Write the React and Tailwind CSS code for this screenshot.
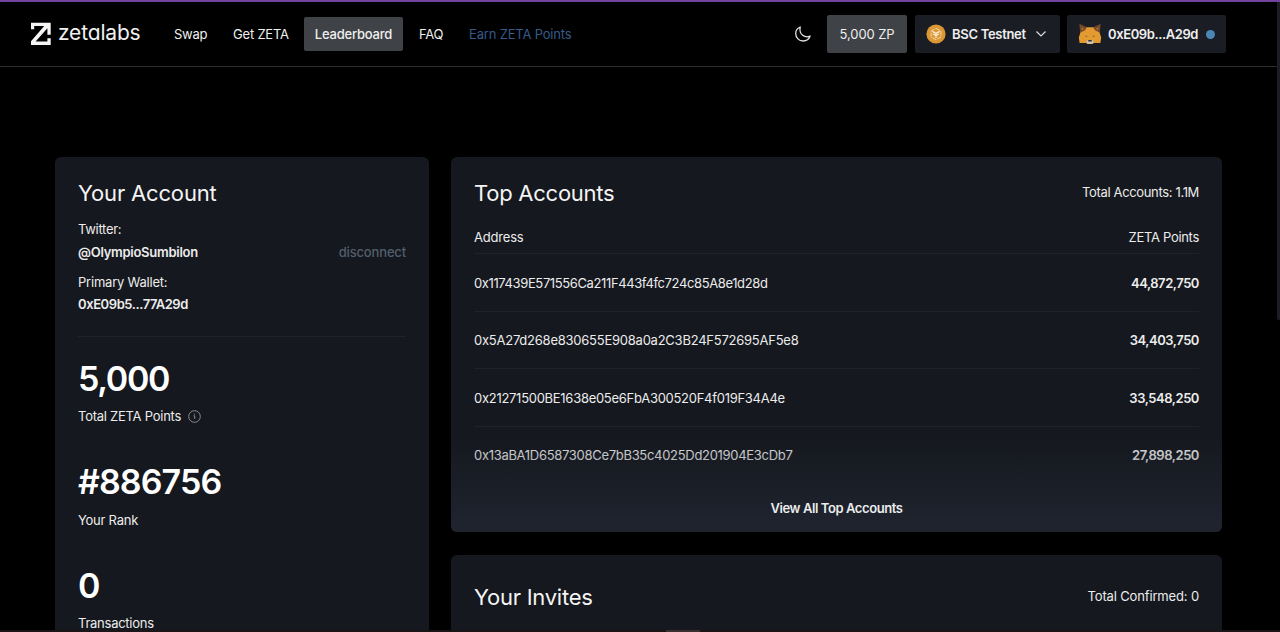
const ACCOUNTS = [
  { address: "0x117439E571556Ca211F443f4fc724c85A8e1d28d", points: "44,872,750", track: "tracking-[-0.38px]" },
  { address: "0x5A27d268e830655E908a0a2C3B24F572695AF5e8", points: "34,403,750", track: "tracking-[-0.24px]" },
  { address: "0x21271500BE1638e05e6FbA300520F4f019F34A4e", points: "33,548,250", track: "tracking-[-0.28px]" },
  { address: "0x13aBA1D6587308Ce7bB35c4025Dd201904E3cDb7", points: "27,898,250", track: "tracking-[-0.3px]" },
];

function Logo() {
  return (
    <div className="flex w-[110px] items-center">
      <svg width="20" height="24" viewBox="0 0 20 24" fill="#f5f5f5" className="shrink-0">
        <path d="M0 0.8H19.7V12.8H16.4V6.3L4.6 19.6H16.4V16.2H19.7V23H0V19.2L13.2 4.1H3.2V7.3H0Z" />
      </svg>
      <span className="-mt-[2px] ml-[7px] text-[21px] leading-[24px] tracking-[-0.2px] whitespace-nowrap text-[#f0f0f0]">
        zet<span className="[font-feature-settings:'cv11']">a</span>labs
      </span>
    </div>
  );
}

function Fox() {
  return (
    <svg width="24" height="22" viewBox="0 0 24 22" className="shrink-0">
      <path d="M2.5 2L8 4.2H16L21.5 2L21.4 9L23.2 14.5L22.4 20H16L14.5 21H9.5L8 20H1.6L0.8 14.5L2.6 9Z" fill="#e39a30" />
      <path d="M1.4 0.8L8.6 4.4L7 7.3L3 9.3L1.8 6Z" fill="#75482a" />
      <path d="M22.6 0.8L15.4 4.4L17 7.3L21 9.3L22.2 6Z" fill="#75482a" />
      <path d="M3.4 4.2L6 5.7L4.2 7.2Z M20.6 4.2L18 5.7L19.8 7.2Z" fill="#b17435" />
      <path d="M7.6 12.4L9.4 13.2L8 13.9Z M16.4 12.4L14.6 13.2L16 13.9Z" fill="#5c4029" />
      <path d="M9 17.3H15L15.6 19.2L14.2 20.8H9.8L8.4 19.2Z" fill="#cdc6ba" />
      <path d="M10.4 16.9H13.6L13.9 18.5H10.1Z" fill="#34302f" />
    </svg>
  );
}

function Coin() {
  return (
    <svg width="20" height="20" viewBox="0 0 20 20" fill="none" className="shrink-0">
      <circle cx="10" cy="10" r="9.6" fill="#dd9836" />
      <path d="M10 4.3L14.9 7.1V12.9L10 15.7L5.1 12.9V7.1Z" stroke="#f3dcb6" strokeWidth="0.9" strokeDasharray="4.4 1.2" />
      <path d="M6.4 7.4L10 9.4L13.6 7.4M10 9.2V14M7.2 10L10 11.8L12.8 10" stroke="#f9ead2" strokeWidth="1.3" />
    </svg>
  );
}

function Header() {
  return (
    <header className="flex h-[65px] shrink-0 items-center border-b border-[#2b2b2b] pr-[54px] pl-[31px] text-[13px] text-[#efefef]">
      <Logo />
      <nav className="ml-[33px] flex items-center">
        <a className="w-[59px] pt-[2px] tracking-[-0.25px]">Swap</a>
        <a className="w-[71px] pt-[2px] tracking-[-0.2px]">Get ZETA</a>
        <a className="flex h-[34px] w-[99px] items-center justify-center rounded-xs bg-[#3f4246] pt-px font-medium tracking-[-0.2px]">
          Leaderboard
        </a>
        <a className="ml-[16px] w-[50px] pt-[2px] tracking-[-0.2px]">FAQ</a>
        <a className="pt-[2px] tracking-[-0.18px] text-[#365a8a]">Earn ZETA Points</a>
      </nav>
      <div className="ml-auto flex items-center">
        <svg width="18" height="18" viewBox="0 0 18 18" fill="none" stroke="#e4e4e4" strokeWidth="1.3" strokeLinejoin="round">
          <path d="M6.2 2C3.5 3.1 1.7 5.7 1.7 8.6C1.7 12.7 5 16 9.1 16C12.3 16 15.1 13.9 16.1 11C11.2 13.4 4.6 9.6 6.2 2Z" />
        </svg>
        <div className="ml-[15px] flex h-[38px] w-[80px] items-center justify-center rounded-xs bg-[#3f4246] pt-px tracking-[-0.1px]">
          5,000 ZP
        </div>
        <div className="ml-[8px] flex h-[38px] w-[145px] items-center rounded-xs bg-[#1b1d25] pl-[11px] font-semibold">
          <Coin />
          <span className="ml-[6px] w-[83px] pt-px tracking-[-0.3px] whitespace-nowrap">BSC Testnet</span>
          <svg width="12" height="8" viewBox="0 0 12 8" fill="none" stroke="#dcdcdc" strokeWidth="1.2">
            <path d="M1.5 1.5L6 6L10.5 1.5" />
          </svg>
        </div>
        <div className="ml-[7px] flex h-[38px] w-[159px] items-center rounded-xs bg-[#1b1d25] pl-[11px] font-semibold">
          <Fox />
          <span className="ml-[6px] w-[98px] pt-px tracking-[-0.4px] whitespace-nowrap">0xE09b...A29d</span>
          <span className="size-[9px] rounded-full bg-[#4a86b6]" />
        </div>
      </div>
    </header>
  );
}

function Stat({ value, label, track, info }) {
  return (
    <div>
      <div className={`flex h-[40px] items-center pb-[2px] text-[34px] font-semibold text-white ${track}`}>{value}</div>
      <div className="mt-[7px] flex h-[22px] items-center tracking-[-0.25px]">
        {label}
        {info && (
          <svg width="13" height="13" viewBox="0 0 13 13" fill="none" stroke="#94979b" className="-mt-[2px] ml-[7px]">
            <circle cx="6.5" cy="6.5" r="5.8" strokeWidth="0.9" />
            <path d="M5.5 5.8H6.7V9M6.5 3.7V4.7" strokeWidth="0.9" />
          </svg>
        )}
      </div>
    </div>
  );
}

function AccountCard() {
  return (
    <section className="h-[600px] w-[374px] rounded-[6px] bg-[#15181e] px-[23px] pt-[22px]">
      <h2 className="flex h-[28px] items-center text-[22px] tracking-[-0.17px] text-[#f4f4f4]">Your Account</h2>
      <div className="mt-[12px] flex h-[22px] items-center tracking-[-0.3px]">Twitter:</div>
      <div className="mt-px flex h-[22px] items-center justify-between font-semibold">
        <span className="tracking-[-0.27px]">@OlympioSumbilon</span>
        <span className="font-medium tracking-[-0.15px] text-[#525e6b]">disconnect</span>
      </div>
      <div className="mt-[8px] flex h-[22px] items-center tracking-[-0.22px]">Primary Wallet:</div>
      <div className="flex h-[22px] items-center font-semibold tracking-[-0.42px]">0xE09b5...77A29d</div>
      <div className="mt-[20px] h-px bg-[#1f2328]" />
      <div className="mt-[22px] flex flex-col gap-[34.5px]">
        <Stat value="5,000" label="Total ZETA Points" track="tracking-[-1.3px]" info />
        <Stat value="#886756" label="Your Rank" track="tracking-[-0.9px]" />
        <Stat value="0" label="Transactions" track="tracking-normal" />
      </div>
    </section>
  );
}

function TopAccountsCard() {
  return (
    <section className="relative h-[375px] overflow-hidden rounded-[6px] bg-[#15181e] px-[23px] pt-[22px]">
      <div className="flex h-[28px] items-center justify-between">
        <h2 className="text-[22px] tracking-[-0.25px] text-[#f4f4f4]">Top Accounts</h2>
        <span className="tracking-[-0.35px]">Total Accounts: 1.1M</span>
      </div>
      <div className="mt-[19px] flex h-[28px] items-start justify-between border-b border-[#1f2328] leading-[22px]">
        <span className="tracking-[-0.2px]">Address</span>
        <span className="tracking-[-0.3px]">ZETA Points</span>
      </div>
      {ACCOUNTS.map((a) => (
        <div key={a.address} className="flex h-[57.5px] items-center justify-between border-b border-[#1f2328] pt-[2px] last-of-type:border-0 last-of-type:pt-px">
          <span className={a.track}>{a.address}</span>
          <span className="font-semibold tracking-[-0.45px]">{a.points}</span>
        </div>
      ))}
      <a className="absolute inset-x-0 bottom-0 flex h-[94px] items-end justify-center bg-linear-to-b from-[#1e232e00] to-[#1e232e] to-90% pb-[13px] leading-[22px] font-semibold tracking-[-0.42px]">
        View All Top Accounts
      </a>
    </section>
  );
}

export default function App() {
  return (
    <div className="relative flex h-[632px] w-[1280px] flex-col overflow-hidden border-t-2 border-[#70449c] bg-black font-['Inter',sans-serif] text-[13px] text-[#ececec]">
      <Header />
      <main className="mt-[90px] ml-[55px] flex items-start gap-[22px]">
        <AccountCard />
        <div className="flex w-[771px] flex-col gap-[23px]">
          <TopAccountsCard />
          <section className="h-[200px] rounded-[6px] bg-[#15181e] px-[23px] pt-[28px]">
            <div className="flex h-[28px] items-center justify-between">
              <h2 className="text-[22px] tracking-[-0.25px] text-[#f4f4f4]">Your Invites</h2>
              <span className="tracking-[-0.15px]">Total Confirmed: 0</span>
            </div>
          </section>
        </div>
      </main>
      <div className="absolute top-0 right-0 h-[318px] w-[3px] rounded-bl-xs bg-[#1d1c24]" />
      <div className="absolute inset-x-0 bottom-0 h-[2px] bg-[#1b1517]">
        <div className="ml-[666px] h-full w-[34px] bg-[#3b302f]" />
      </div>
    </div>
  );
}
